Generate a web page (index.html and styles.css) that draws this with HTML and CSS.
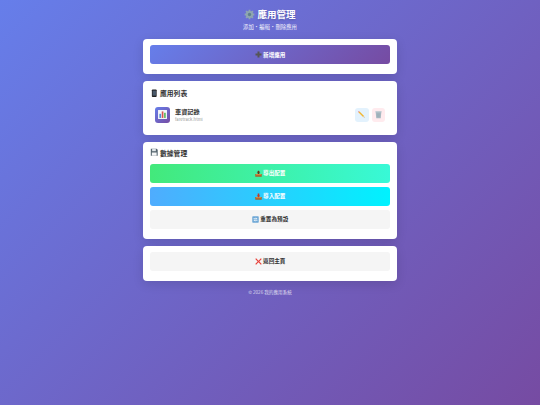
FILE: index.html
```html
<!DOCTYPE html>
<html lang="zh-Hant">
<head>
<meta charset="utf-8">
<title>應用管理</title>
<link rel="stylesheet" href="styles.css">
</head>
<body>
<div class="page">
  <header class="header">
    <h1 class="title">
      <svg class="ico ico-title" viewBox="0 0 16 16"><g fill="#8fa6b0"><circle cx="8" cy="8" r="5.2"/><g stroke="#8fa6b0" stroke-width="2.6"><path d="M8 1v14M1 8h14M3 3l10 10M13 3L3 13"/></g></g><circle cx="8" cy="8" r="2.4" fill="#5f7f8c"/></svg>
      <span>應用管理</span>
    </h1>
    <p class="subtitle">添加・編輯・刪除應用</p>
  </header>

  <section class="card">
    <button class="btn btn-primary">
      <svg class="ico" viewBox="1 1 14 14"><path fill="#555" d="M6 2h4v4h4v4h-4v4H6v-4H2V6h4z"/></svg>
      <span>新增應用</span>
    </button>
  </section>

  <section class="card card-list">
    <h2 class="section-title">
      <svg class="ico ico-section" viewBox="0 0 16 16"><rect x="3.5" y="1" width="9" height="14" rx="1.5" fill="#222"/><rect x="4.8" y="3" width="6.4" height="9.5" fill="#4a5a6a"/></svg>
      <span>應用列表</span>
    </h2>
    <div class="app-row">
      <div class="app-icon">
        <svg viewBox="0 0 16 16"><rect x="1.5" y="1.5" width="13" height="13" fill="#f4f6fa"/><rect x="3.5" y="7" width="2.4" height="6" fill="#4a90d9"/><rect x="6.9" y="3.5" width="2.4" height="9.5" fill="#d9534f"/><rect x="10.3" y="5.5" width="2.4" height="7.5" fill="#5cb85c"/></svg>
      </div>
      <div class="app-info">
        <div class="app-name">車資記錄</div>
        <div class="app-file">faretrack.html</div>
      </div>
      <div class="app-actions">
        <button class="act act-edit"><svg viewBox="0 0 16 16"><path fill="#f2b632" d="M2.8 4.6l1.8-1.8 8 8-1.8 1.8z"/><path fill="#e8808a" d="M1.6 3.4l1.8-1.8 1.2 1.2-1.8 1.8z"/><path fill="#e9c89a" d="M10.8 12.6l1.8-1.8 1 3z"/><path fill="#444" d="M12.9 13.1l.7.7-1-.3z"/></svg></button>
        <button class="act act-del"><svg viewBox="0 0 16 16"><path fill="#a9bac3" d="M3 3.5h10l-1 11H4z"/><path fill="#bccad1" d="M2.5 2h11v2h-11z"/><path stroke="#8ea1aa" stroke-width=".7" d="M6 6v7M8 6v7M10 6v7"/></svg></button>
      </div>
    </div>
  </section>

  <section class="card card-data">
    <h2 class="section-title">
      <svg class="ico ico-section" viewBox="0 0 16 16"><path fill="#56666f" d="M1.5 1.5h11l2 2v11h-13z"/><rect x="4" y="1.5" width="7" height="4.5" fill="#dfe5e8"/><rect x="3.5" y="8.5" width="9" height="6" fill="#f4f6f7"/></svg>
      <span>數據管理</span>
    </h2>
    <div class="stack">
      <button class="btn btn-export">
        <svg class="ico" viewBox="1 1 14 14"><path fill="#a0622d" d="M1.5 9h13v5.5h-13z"/><path fill="#d98a3d" d="M4 9h8l2.5 2.5h-13z"/><path fill="#5d3a1c" d="M8 2l3.5 4H9.6v3H6.4V6H4.5z"/></svg>
        <span>導出配置</span>
      </button>
      <button class="btn btn-import">
        <svg class="ico" viewBox="1 1 14 14"><path fill="#a0622d" d="M1.5 9h13v5.5h-13z"/><path fill="#d98a3d" d="M4 9h8l2.5 2.5h-13z"/><path fill="#c0392b" d="M8 10L4.5 6h1.9V2h3.2v4h1.9z"/></svg>
        <span>導入配置</span>
      </button>
      <button class="btn btn-plain">
        <svg class="ico" viewBox="1 1 14 14"><rect x="1.5" y="1.5" width="13" height="13" rx="1.5" fill="#6fa8d6"/><path fill="none" stroke="#fff" stroke-width="1.6" d="M4 6.5h7M9 4.5l2 2M12 9.5H5M7 11.5l-2-2"/></svg>
        <span>重置為預設</span>
      </button>
    </div>
  </section>

  <section class="card">
    <button class="btn btn-plain">
      <svg class="ico" viewBox="1 1 14 14"><path fill="#e8413a" d="M3.2 1.5L8 6.3l4.8-4.8 1.7 1.7L9.7 8l4.8 4.8-1.7 1.7L8 9.7l-4.8 4.8-1.7-1.7L6.3 8 1.5 3.2z"/></svg>
      <span>返回主頁</span>
    </button>
  </section>

  <footer class="footer">© 2026 我的應用系統</footer>
</div>
</body>
</html>
```

FILE: styles.css
```css
* { box-sizing: border-box; }
html, body { margin: 0; height: 100%; }
body {
  min-height: 405px;
  background: linear-gradient(135deg, #667eea 0%, #764ba2 100%);
  font-family: "Noto Sans CJK TC", "Liberation Sans", sans-serif;
  color: #333;
  overflow: hidden;
}
.page {
  width: 254px;
  margin: 0 auto;
  padding-top: 8px;
  display: flex;
  flex-direction: column;
  gap: 7px;
}
.header { text-align: center; color: #fff; height: 24px; }
.title {
  margin: 0;
  font-size: 9.5px;
  line-height: 13px;
  font-weight: 700;
  display: flex;
  justify-content: center;
  align-items: center;
  gap: 2px;
  text-shadow: 0 1px 2px rgba(0,0,0,.2);
}
.subtitle { margin: 2px 0 0; font-size: 5.4px; line-height: 8px; opacity: .9; }
.card {
  background: #fff;
  border-radius: 4px;
  padding: 6px 7px 10px;
  box-shadow: 0 3px 11px rgba(0,0,0,.12);
}
.card-list { padding-bottom: 6px; }
.card-data { padding-top: 5px; }
.ico { width: 7px; height: 7px; flex: none; }
.ico-title { width: 11px; height: 11px; }
.ico-section { width: 8.5px; height: 8.5px; }
.btn {
  width: 100%;
  height: 19px;
  border: 0;
  border-radius: 3px;
  padding: 0;
  font-family: inherit;
  font-size: 5.6px;
  font-weight: 700;
  display: flex;
  align-items: center;
  justify-content: center;
  gap: 1.5px;
}
.btn-primary { background: linear-gradient(135deg, #667eea, #764ba2); color: #fff; }
.btn-export { background: linear-gradient(90deg, #43e97b, #38f9d7); color: #fff; }
.btn-import { background: linear-gradient(90deg, #4facfe, #00f2fe); color: #fff; }
.btn-plain { background: #f5f5f5; color: #333; }
.section-title {
  margin: 0;
  font-size: 6.8px;
  line-height: 10px;
  font-weight: 700;
  display: flex;
  align-items: center;
  gap: 1.5px;
  padding-top: 1px;
}
.app-row {
  display: flex;
  align-items: center;
  padding: 6px 5px;
  margin-top: 3px;
  gap: 5px;
}
.app-icon {
  width: 15px;
  height: 15.5px;
  border-radius: 3px;
  background: linear-gradient(135deg, #667eea, #764ba2);
  display: flex;
  align-items: center;
  justify-content: center;
}
.app-icon svg { width: 11px; height: 11px; }
.app-info { flex: 1; min-width: 0; }
.app-name { font-size: 6.2px; line-height: 8px; font-weight: 700; color: #333; }
.app-file { font-size: 4.2px; line-height: 6px; color: #999; }
.app-actions { display: flex; gap: 3px; }
.act {
  width: 13.5px;
  height: 14px;
  border: 0;
  border-radius: 3px;
  padding: 0;
  display: flex;
  align-items: center;
  justify-content: center;
}
.act svg { width: 9px; height: 9px; }
.act-edit { background: #e3f2fd; }
.act-del { background: #ffebee; }
.stack { display: flex; flex-direction: column; gap: 4px; margin-top: 6px; }
.footer { text-align: center; font-size: 4.6px; line-height: 7px; color: rgba(255,255,255,.75); margin-top: 1.5px; }
```
